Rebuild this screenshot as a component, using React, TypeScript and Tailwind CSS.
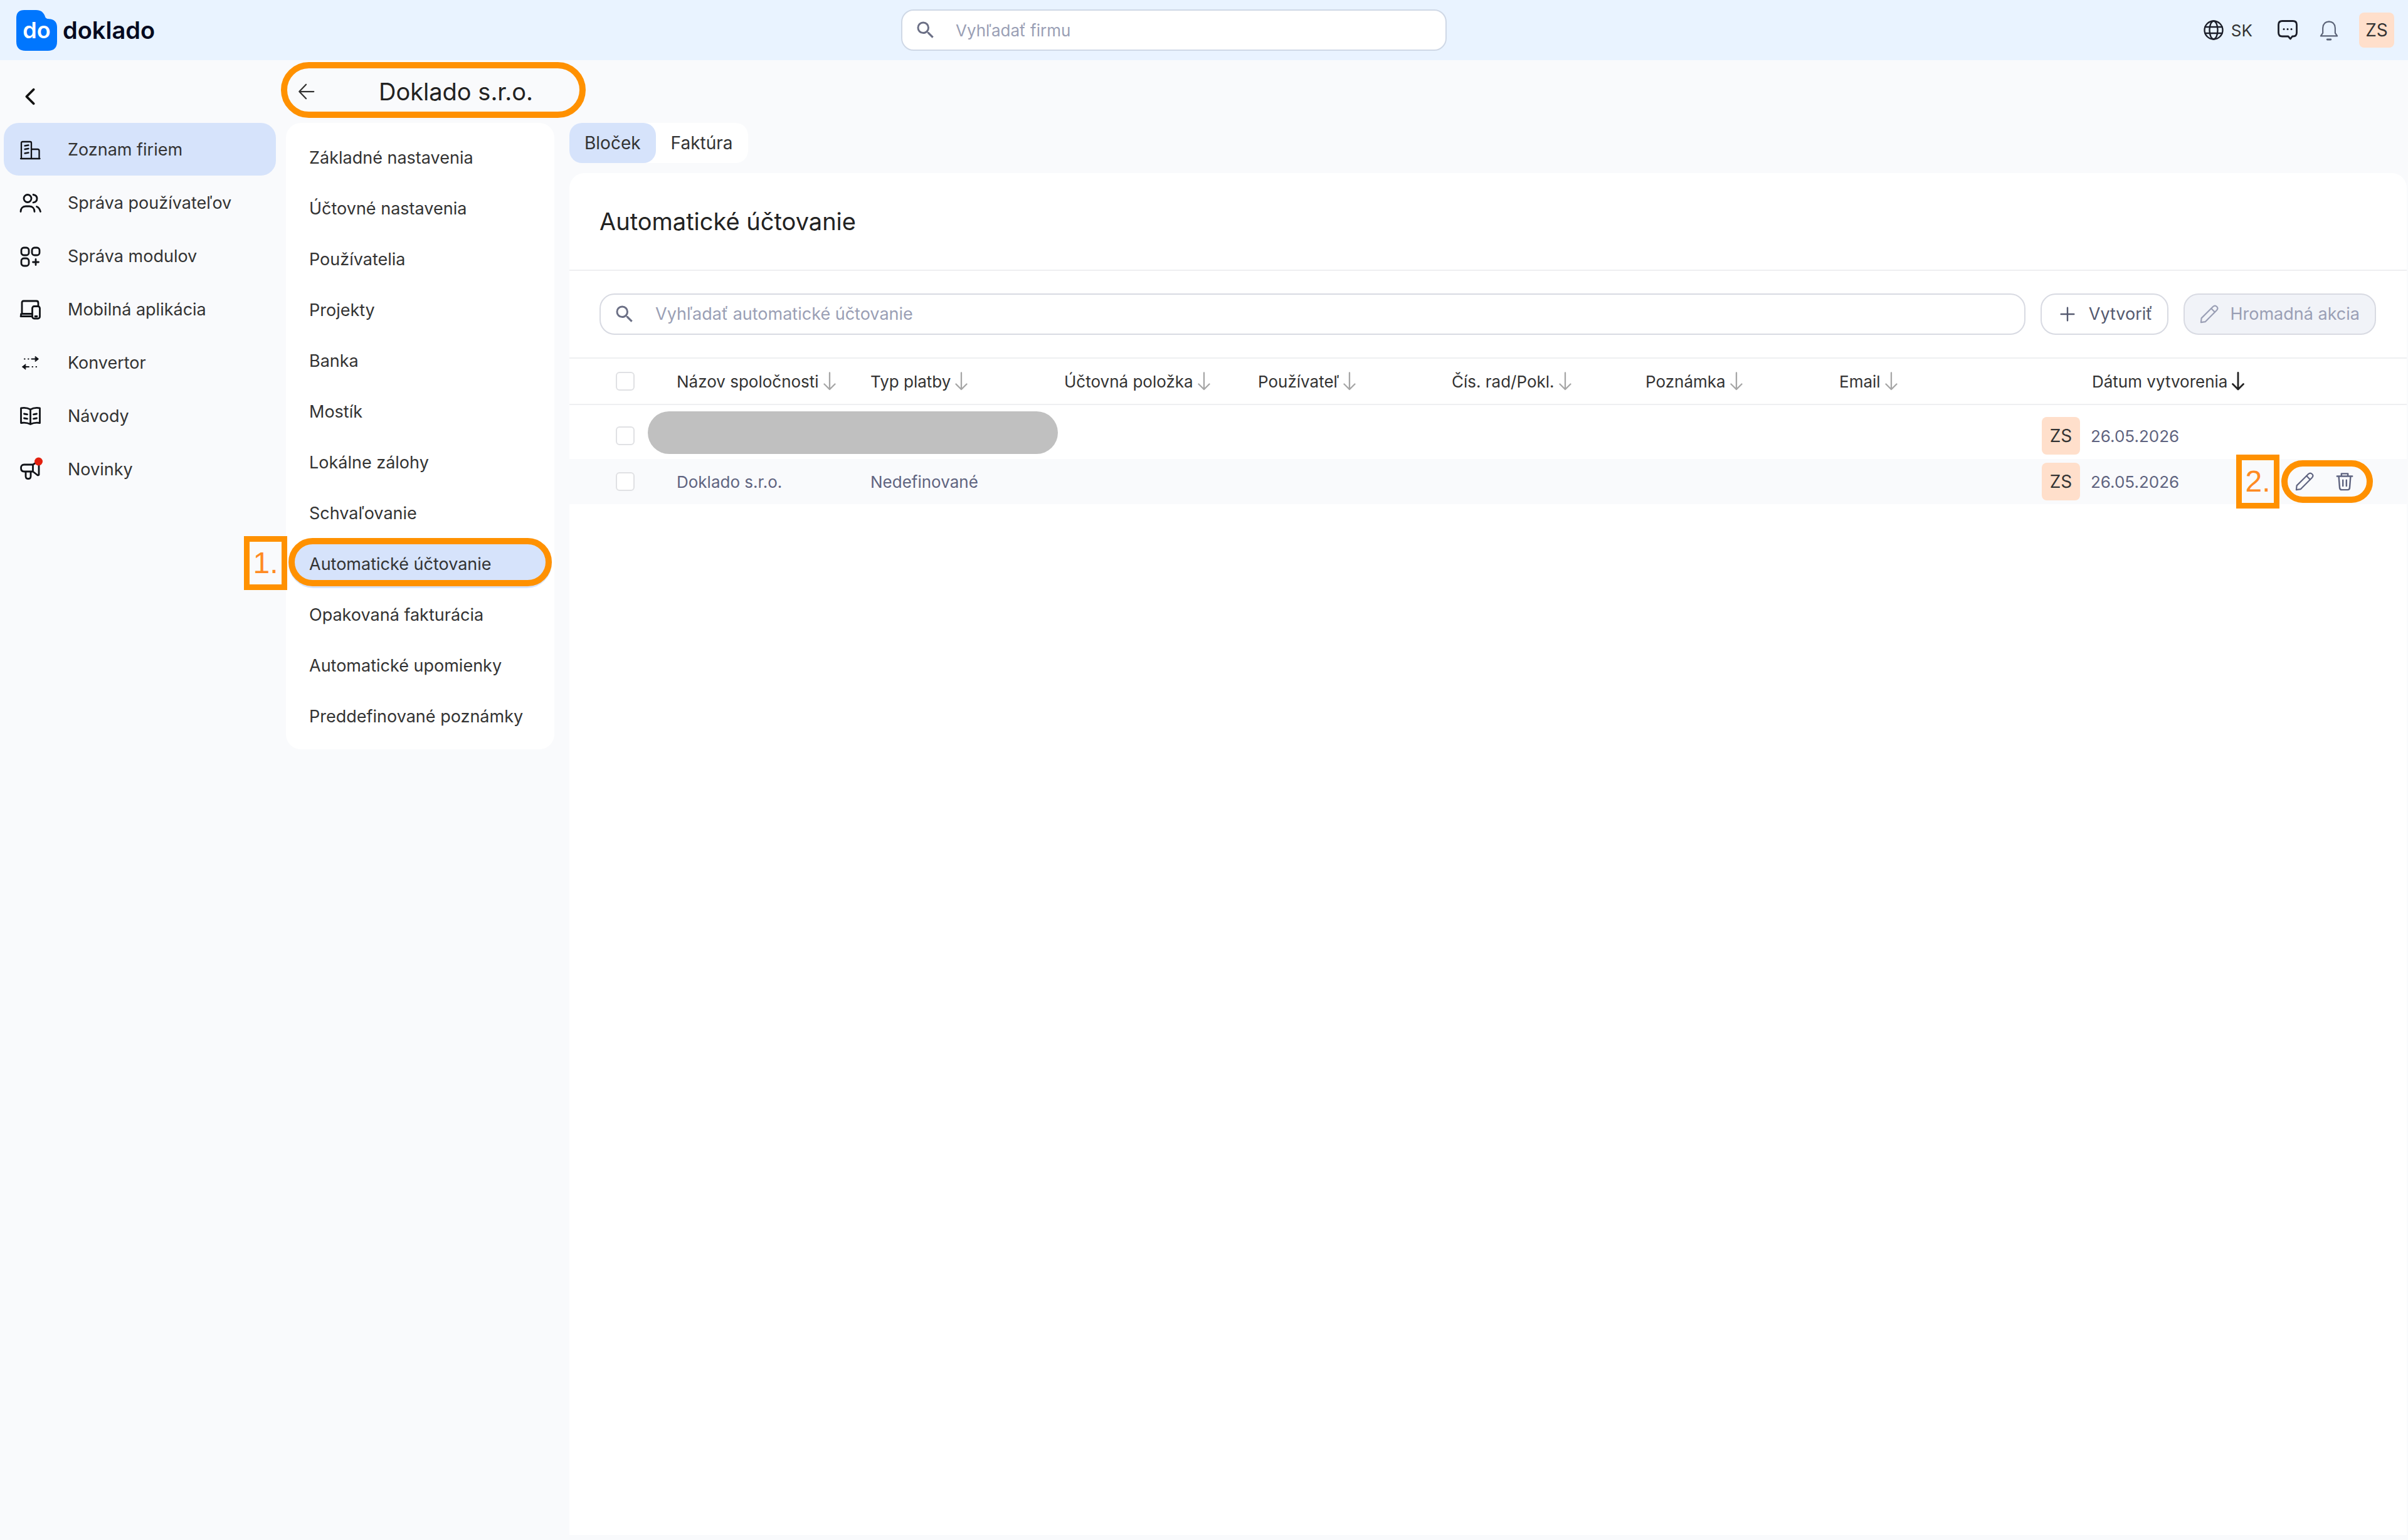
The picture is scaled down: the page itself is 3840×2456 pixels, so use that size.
import { useState } from "react";
import type { ReactNode } from "react";
import { MdSearch } from "react-icons/md";

interface SidebarItem {
  label: string;
  icon: ReactNode;
}

interface AccountingRow {
  id: number;
  company: string | null;
  payment: string;
  author: string;
  created: string;
}

interface IconProps {
  children: ReactNode;
  className?: string;
  strokeWidth?: number;
}

function Icon({ children, className = "size-8", strokeWidth = 2 }: IconProps) {
  return (
    <svg
      viewBox="0 0 32 32"
      className={`shrink-0 overflow-visible ${className}`}
      fill="none"
      stroke="currentColor"
      strokeWidth={strokeWidth}
      strokeLinecap="round"
      strokeLinejoin="round"
      aria-hidden="true"
    >
      {children}
    </svg>
  );
}

const sidebarItems: SidebarItem[] = [
  {
    label: "Zoznam firiem",
    icon: (
      <Icon strokeWidth={2.3}>
        <path d="M2 30V5q0-2 2-2h12q2 0 2 2v25M18 15h10q2.500 0 2.500 2.500V30M1 30h30.500" />
        <path d="M7.500 9.500l6-1M7.500 15l6-1M7.500 21.500l6-1" />
      </Icon>
    ),
  },
  {
    label: "Správa používateľov",
    icon: (
      <Icon strokeWidth={2.8}>
        <circle cx="12" cy="8.500" r="6" />
        <path d="M21 2.500c3.600.6 6 3 6 6.200s-2.400 5.600-6 6.300" />
        <path d="M1 29.500c0-5 3-8.500 8-8.500h6c5 0 8 3.500 8 8.500M26.500 21.500c3.200 1.300 5 4 6 8" />
      </Icon>
    ),
  },
  {
    label: "Správa modulov",
    icon: (
      <Icon strokeWidth={2.8}>
        <rect x="2" y="2" width="12" height="12" rx="4" />
        <rect x="19" y="2" width="12" height="12" rx="4" />
        <rect x="2" y="19" width="12" height="12" rx="4" />
        <path d="M25 20.500v9M20.500 25h9" />
      </Icon>
    ),
  },
  {
    label: "Mobilná aplikácia",
    icon: (
      <Icon strokeWidth={2.8}>
        <path d="M3 22.500V4.500Q3 2 5.500 2H26q3 0 3 3v4.500M3 22.500h16M1 26.500h18M1.500 23v3.500" />
        <rect x="19.500" y="10.500" width="12" height="19.500" rx="3" />
        <path d="M24 26.500h3" />
      </Icon>
    ),
  },
  {
    label: "Konvertor",
    icon: (
      <Icon>
        <path d="M18.500 9.500H28M13 9.500h.6M7 9.500h.6M14 22H4.500M19.500 22h.6M25.500 22h.6" />
        <path d="M24.500 5.500l5 4-5 4zM8.500 18l-5 4 5 4z" fill="currentColor" strokeWidth={1} />
      </Icon>
    ),
  },
  {
    label: "Návody",
    icon: (
      <Icon strokeWidth={2.8}>
        <path d="M16.500 5C12 2.500 6 2 1.500 2.800V26.500c5-.8 10.500-.3 15 2 4.500-2.300 10-2.800 15-2V2.800C27 2 21 2.500 16.500 5zM16.500 5v23.500" />
        <path d="M6.500 12l5 .8M6.500 19l5 .8M26.500 12l-5 .8M26.500 19l-5 .8" />
      </Icon>
    ),
  },
  {
    label: "Novinky",
    icon: (
      <Icon strokeWidth={2.8}>
        <path d="M20.500 8H6.500Q1.500 8 1.500 13.500T6.500 19h14zM20.500 8L30 2v22q-.8 1.600-2.500.5L20.500 19" />
        <path d="M9 19.500v7q0 4 4 4t4-4v-7" />
        <circle cx="29.500" cy="3" r="6.500" fill="#e3200f" stroke="none" />
      </Icon>
    ),
  },
];

const companyMenu = [
  "Základné nastavenia",
  "Účtovné nastavenia",
  "Používatelia",
  "Projekty",
  "Banka",
  "Mostík",
  "Lokálne zálohy",
  "Schvaľovanie",
  "Automatické účtovanie",
  "Opakovaná fakturácia",
  "Automatické upomienky",
  "Preddefinované poznámky",
];

const columns = [
  "Názov spoločnosti",
  "Typ platby",
  "Účtovná položka",
  "Používateľ",
  "Čís. rad/Pokl.",
  "Poznámka",
  "Email",
];

const rows: AccountingRow[] = [
  { id: 1, company: null, payment: "", author: "ZS", created: "26.05.2026" },
  { id: 2, company: "Doklado s.r.o.", payment: "Nedefinované", author: "ZS", created: "26.05.2026" },
];

function PencilIcon() {
  return (
    <Icon className="size-[30px]" strokeWidth={2.3}>
      <path d="M2 30l.8-7.200L22.500 3.300q3.200-3.200 6.300-.2t0 6.300L9.200 29z" />
      <path d="M19.500 6.500l6 6" />
    </Icon>
  );
}

function TrashIcon() {
  return (
    <Icon className="size-[30px]" strokeWidth={2.6}>
      <path d="M3 7h26M10.500 6.500v-4h11v4" />
      <path d="M6 7.500l1.500 19q.3 3.500 3.500 3.500h10q3.200 0 3.500-3.500l1.500-19M13 13.500v10M19 13.500v10" />
    </Icon>
  );
}

function SortArrow({ active = false }: { active?: boolean }) {
  return (
    <svg
      viewBox="0 0 20 30"
      className={`h-[30px] w-5 shrink-0 ${active ? "text-[#222222]" : "text-[#a6a6a6]"}`}
      fill="none"
      stroke="currentColor"
      strokeWidth={active ? 2.8 : 2.3}
      strokeLinecap="round"
      strokeLinejoin="round"
      aria-hidden="true"
    >
      <path d="M10 1.500V28M1.500 19.500L10 28l8.500-8.500" />
    </svg>
  );
}

function Checkbox({ label }: { label: string }) {
  return (
    <input
      type="checkbox"
      aria-label={label}
      className="block size-[30px] appearance-none rounded-md border-2 border-[#e0e1e4] bg-white checked:bg-[#0076fe]"
    />
  );
}

function Avatar({ initials }: { initials: string }) {
  return (
    <span className="flex h-[60px] w-[61px] shrink-0 items-center justify-center rounded-lg bg-[#ffdfcb] text-[28px] text-[#333333]">
      {initials}
    </span>
  );
}

function StepNumber({ children, className }: { children: ReactNode; className: string }) {
  return (
    <span
      className={`absolute top-1/2 flex h-[86px] w-[69px] -translate-y-1/2 items-center justify-center border-[9px] border-[#ff9100] bg-[#f9fafc] font-['Liberation_Sans',sans-serif] text-[48px] leading-none text-[#ff8a22] ${className}`}
    >
      {children}
    </span>
  );
}

function Header() {
  return (
    <header className="grid h-24 grid-cols-[1437fr_870fr_1533fr] items-center bg-[#e9f3ff]">
      <a href="#" className="flex items-center gap-[9px] pl-[26px]">
        <span className="relative flex size-[65px] items-center justify-center">
          <svg viewBox="0 0 66 66" className="absolute inset-0 size-full" aria-hidden="true">
            <path
              d="M13 0h19c8 0 12 4 14 9 1.300 4.500 3 5.500 7 5.500 8 0 13 5 13 13V51q0 15-15 15H15Q0 66 0 51V13Q0 0 13 0z"
              fill="#0076fe"
            />
          </svg>
          <span className="relative text-[36px] font-semibold leading-none text-white">do</span>
        </span>
        <span className="text-[38px] font-semibold leading-none text-[#050a20]">doklado</span>
      </a>

      <label className="flex h-[66px] items-center gap-[30px] rounded-[20px] border-2 border-[#cfd8e6] bg-white px-[19px]">
        <MdSearch className="size-9 shrink-0 text-[#6b6f85]" />
        <input
          type="search"
          aria-label="Vyhľadať firmu"
          placeholder="Vyhľadať firmu"
          className="min-w-0 flex-1 text-[26px] text-[#333333] outline-none placeholder:text-[#9a9fb5]"
        />
      </label>

      <div className="flex items-center justify-end pr-[22px] text-[#1c1f2a]">
        <button type="button" className="mr-10 flex items-center gap-3 text-[26px] text-[#333333]">
          <span className="text-[#1c1f2a]">
            <Icon strokeWidth={2.4}>
              <circle cx="16" cy="16" r="14.500" />
              <ellipse cx="16" cy="16" rx="6.500" ry="14.500" />
              <path d="M2.500 11h27M2.500 21h27" />
            </Icon>
          </span>
          SK
        </button>
        <button type="button" aria-label="Správy" className="mr-[35px]">
          <Icon strokeWidth={2.8}>
            <path d="M7.500 1.500h17q6 0 6 6v12.500q0 6-6 6h-1L20.500 30 17 26H7.500q-6 0-6-6V7.500q0-6 6-6z" />
            <path d="M10 14.500h.1M16 14.500h.1M22 14.500h.1" strokeWidth={3} />
          </Icon>
        </button>
        <button type="button" aria-label="Upozornenia" className="mr-[33px] text-[#5c6478]">
          <Icon className="size-[30px]" strokeWidth={2.3}>
            <path d="M5.500 21V12.500Q6 2 16 1.500 26 2 26.500 12.500V21l3.500 5H2z" />
            <path d="M13 32h6" strokeWidth={3} />
          </Icon>
        </button>
        <button
          type="button"
          className="flex size-14 items-center justify-center rounded-lg bg-[#ffdfcb] text-[28px] text-[#333333]"
        >
          ZS
        </button>
      </div>
    </header>
  );
}

function Sidebar() {
  return (
    <aside className="w-[448px] shrink-0 pl-[6px] pr-2">
      <div className="flex h-[100px] items-center pl-6 pt-4">
        <button type="button" aria-label="Zbaliť menu" className="text-[#111111]">
          <Icon className="size-9" strokeWidth={3.4}>
            <path d="M21 6L11 16l10 10" />
          </Icon>
        </button>
      </div>
      <nav className="flex flex-col gap-px">
        {sidebarItems.map((item, i) => (
          <a
            key={item.label}
            href="#"
            className={`flex h-[84px] items-center gap-11 rounded-3xl pl-[26px] pt-[2px] text-[27px] ${
              i === 0 ? "bg-[#d6e3fb]" : ""
            }`}
          >
            <span className="text-[#111318]">{item.icon}</span>
            {item.label}
          </a>
        ))}
      </nav>
    </aside>
  );
}

function CompanyNav() {
  return (
    <div className="ml-2 w-[428px] shrink-0">
      <div className="relative flex h-[100px] items-center pl-[18px]">
        <button type="button" aria-label="Späť" className="mr-[100px]">
          <Icon className="size-[30px]" strokeWidth={2.4}>
            <path d="M28 16H4M15 4L3.500 16 15 28" />
          </Icon>
        </button>
        <h2 className="text-[38px] leading-none text-[#222222]">Doklado s.r.o.</h2>
        <span className="pointer-events-none absolute -left-2 -right-[50px] bottom-2 top-[3px] rounded-full border-[10px] border-[#ff9100]" />
      </div>
      <nav className="flex flex-col gap-px rounded-3xl bg-white px-1 pb-[14px] pt-[14px]">
        {companyMenu.map((label) => {
          const active = label === "Automatické účtovanie";
          return (
            <a
              key={label}
              href="#"
              className={`relative flex h-20 items-center rounded-full pl-[33px] pt-1 text-[27px] ${
                active ? "bg-[#d6e3fb]" : ""
              }`}
            >
              {label}
              {active && (
                <>
                  <span className="pointer-events-none absolute inset-x-0 bottom-[3px] top-0 rounded-full border-[10px] border-[#ff9100]" />
                  <StepNumber className="right-full mr-[2px]">1.</StepNumber>
                </>
              )}
            </a>
          );
        })}
      </nav>
    </div>
  );
}

function AccountingTable() {
  return (
    <table className="w-full table-fixed border-separate border-spacing-0 text-left text-[26px]">
      <colgroup>
        <col className="w-[171px]" />
        {columns.map((name) => (
          <col key={name} />
        ))}
        <col className="w-[596px]" />
      </colgroup>
      <thead>
        <tr className="[&>th]:h-[76px] [&>th]:border-y-2 [&>th]:border-[#eeeff1] [&>th]:p-0 [&>th]:font-normal">
          <th className="align-middle">
            <div className="pl-[74px]">
              <Checkbox label="Vybrať všetko" />
            </div>
          </th>
          {columns.map((name) => (
            <th key={name}>
              <button type="button" className="flex items-center gap-[7px] whitespace-nowrap">
                {name}
                <SortArrow />
              </button>
            </th>
          ))}
          <th>
            <button type="button" className="ml-[94px] flex items-center gap-[7px] whitespace-nowrap">
              Dátum vytvorenia
              <SortArrow active />
            </button>
          </th>
        </tr>
      </thead>
      <tbody className="text-[#5f6480]">
        {rows.map((row) => {
          const hidden = row.company === null;
          return (
            <tr
              key={row.id}
              className={
                hidden ? "[&>td]:h-[86px] [&>td]:pt-3" : "bg-[#f9fafc] [&>td]:h-[72px]"
              }
            >
              <td>
                <div className="pl-[74px]">
                  <Checkbox label={`Vybrať riadok ${row.id}`} />
                </div>
              </td>
              <td className="relative">
                {hidden ? (
                  <span className="absolute -left-[46px] top-[10px] h-[68px] w-[654px] rounded-full bg-[#c0c0c0]" />
                ) : (
                  row.company
                )}
              </td>
              <td>{row.payment}</td>
              <td />
              <td />
              <td />
              <td />
              <td />
              <td>
                <div className="flex items-center pl-[14px]">
                  <Avatar initials={row.author} />
                  <span className="ml-[17px]">{row.created}</span>
                  {!hidden && (
                    <div className="relative ml-auto mr-[54px] flex h-[68px] items-center gap-[34px] rounded-full border-[10px] border-[#ff9100] pl-3 pr-5">
                      <StepNumber className="right-full mr-[13px]">2.</StepNumber>
                      <button type="button" aria-label="Upraviť">
                        <PencilIcon />
                      </button>
                      <button type="button" aria-label="Zmazať">
                        <TrashIcon />
                      </button>
                    </div>
                  )}
                </div>
              </td>
            </tr>
          );
        })}
      </tbody>
    </table>
  );
}

export default function App() {
  const [tab, setTab] = useState("Bloček");

  return (
    <div className="flex min-h-screen flex-col bg-[#f9fafc] font-['Inter',sans-serif] text-[#333333]">
      <Header />
      <div className="flex flex-1">
        <Sidebar />
        <CompanyNav />

        <main className="ml-6 mr-[2px] flex min-w-0 flex-1 flex-col pb-2 pt-[100px]">
          <div className="mb-4 flex h-16 self-start rounded-[20px] bg-white text-[28px]">
            {["Bloček", "Faktúra"].map((name) => (
              <button
                key={name}
                type="button"
                onClick={() => setTab(name)}
                className={`rounded-[20px] px-6 ${tab === name ? "bg-[#d6e3fb]" : ""}`}
              >
                {name}
              </button>
            ))}
          </div>

          <section className="flex-1 rounded-t-3xl bg-white">
            <div className="flex h-[156px] items-center border-b-2 border-[#eeeff1] px-12">
              <h1 className="text-[38px] leading-none text-[#222222]">Automatické účtovanie</h1>
            </div>

            <div className="flex gap-6 py-9 pl-12 pr-[49px] text-[27px]">
              <label className="flex h-[66px] min-w-0 flex-1 items-center gap-[31px] rounded-[24px] border-2 border-[#d8dae2] px-5">
                <MdSearch className="size-9 shrink-0 text-[#6b6f85]" />
                <input
                  type="search"
                  aria-label="Vyhľadať automatické účtovanie"
                  placeholder="Vyhľadať automatické účtovanie"
                  className="min-w-0 flex-1 text-[27px] text-[#333333] outline-none placeholder:text-[#9a9fb5]"
                />
              </label>
              <button
                type="button"
                className="flex items-center gap-[19px] rounded-[24px] border-2 border-[#d8dae2] pl-[26px] pr-6 text-[#555a70]"
              >
                <Icon className="size-[30px]" strokeWidth={2.6}>
                  <path d="M16 5v22M5 16h22" />
                </Icon>
                Vytvoriť
              </button>
              <button
                type="button"
                disabled
                className="flex items-center gap-[18px] rounded-[24px] border-2 border-[#d8dae2] bg-[#f1f3f8] px-6 text-[#9a9fb5]"
              >
                <PencilIcon />
                Hromadná akcia
              </button>
            </div>

            <AccountingTable />
          </section>
        </main>
      </div>
    </div>
  );
}
